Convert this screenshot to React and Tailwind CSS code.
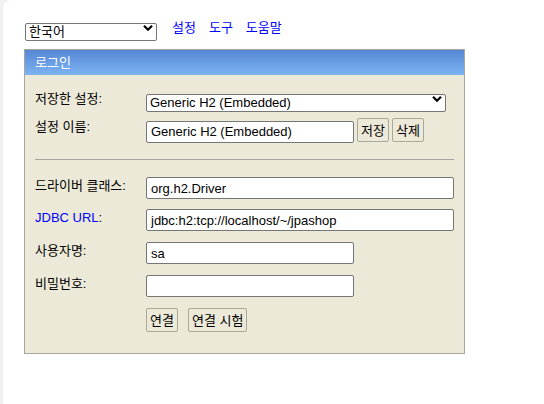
const font = { fontFamily: '"Liberation Sans", "Noto Sans CJK KR", sans-serif' };

const Select = ({ value, className }) => (
  <div className={`relative ${className}`}>
    <select
      defaultValue={value}
      className="appearance-none w-full h-full bg-white border border-[#767676] rounded-[2px] pl-[3px] text-[13px] leading-[16px] text-black outline-none"
      style={font}
    >
      <option>{value}</option>
    </select>
    {/* dropdown chevron */}
    <svg className="absolute right-[4px] top-1/2 -translate-y-1/2 w-[10px] h-[7px] pointer-events-none" viewBox="0 0 10 7">
      <path d="M1 1.2 L5 5.2 L9 1.2" fill="none" stroke="#000" strokeWidth="2.2" />
    </svg>
  </div>
);

const Input = ({ value = '', width }) => (
  <input
    defaultValue={value}
    className={`${width} h-[22px] bg-white border border-[#767676] rounded-[2px] px-[4px] text-[13px] text-black outline-none`}
    style={font}
  />
);

const Btn = ({ children }) => (
  <button className="h-[24px] px-[3px] bg-[#ece9d8] border border-[#aaa79b] rounded-[2px] text-[13px] text-black leading-none">
    {children}
  </button>
);

const Row = ({ label, blue, children }) => (
  <div className="flex items-start">
    <div className={`w-[111px] text-[13px] leading-[16px] pt-[1px] ${blue ? 'text-[#0000ff]' : 'text-black'}`}>
      {blue ? <><span>{label}</span><span className="text-black">:</span></> : label}
    </div>
    {children}
  </div>
);

export default function App() {
  return (
    <div className="bg-[#f1f1f1] pl-[3px] h-[404px] overflow-hidden" style={font}>
      <div className="bg-white rounded-tl-[8px] h-full pl-[21px] pt-[19px]">
        {/* top bar */}
        <div className="flex items-center gap-[15px] pl-[1px]">
          <Select value="한국어" className="w-[132px] h-[18px]" />
          <div className="flex gap-[13px] text-[13px] leading-[16px] text-[#0000ff]">
            <a href="#">설정</a>
            <a href="#">도구</a>
            <a href="#">도움말</a>
          </div>
        </div>

        {/* login panel */}
        <div className="mt-[12px] w-[441px] border border-[#a8a69d] bg-[#ece9d8]">
          <div className="h-[25px] bg-gradient-to-b from-[#5787d4] to-[#7cb3f3] text-white text-[13px] leading-[25px] pl-[10px]">
            로그인
          </div>
          <div className="pl-[10px] pr-[10px] pt-[15px] pb-[21px] flex flex-col">
            <Row label="저장한 설정:">
              <Select value="Generic H2 (Embedded)" className="w-[300px] h-[18px]" />
            </Row>
            <div className="mt-[10px]">
              <Row label="설정 이름:">
                <div className="flex items-start gap-[3px]">
                  <div className="pt-[1px]"><Input value="Generic H2 (Embedded)" width="w-[208px]" /></div>
                  <Btn>저장</Btn>
                  <Btn>삭제</Btn>
                </div>
              </Row>
            </div>

            <div className="mt-[16px] mb-[17px] border-t border-[#a5a5a5]" />

            <div className="flex flex-col gap-[10px]">
              <Row label="드라이버 클래스:">
                <Input value="org.h2.Driver" width="w-[308px]" />
              </Row>
              <Row label="JDBC URL" blue>
                <Input value="jdbc:h2:tcp://localhost/~/jpashop" width="w-[308px]" />
              </Row>
              <div className="mt-[1px]">
                <Row label="사용자명:">
                  <Input value="sa" width="w-[208px]" />
                </Row>
              </div>
              <div className="mt-[1px]">
                <Row label="비밀번호:">
                  <Input width="w-[208px]" />
                </Row>
              </div>
              <div className="mt-[1px] flex gap-[10px] pl-[111px]">
                <Btn>연결</Btn>
                <Btn>연결 시험</Btn>
              </div>
            </div>
          </div>
        </div>
      </div>
    </div>
  );
}
